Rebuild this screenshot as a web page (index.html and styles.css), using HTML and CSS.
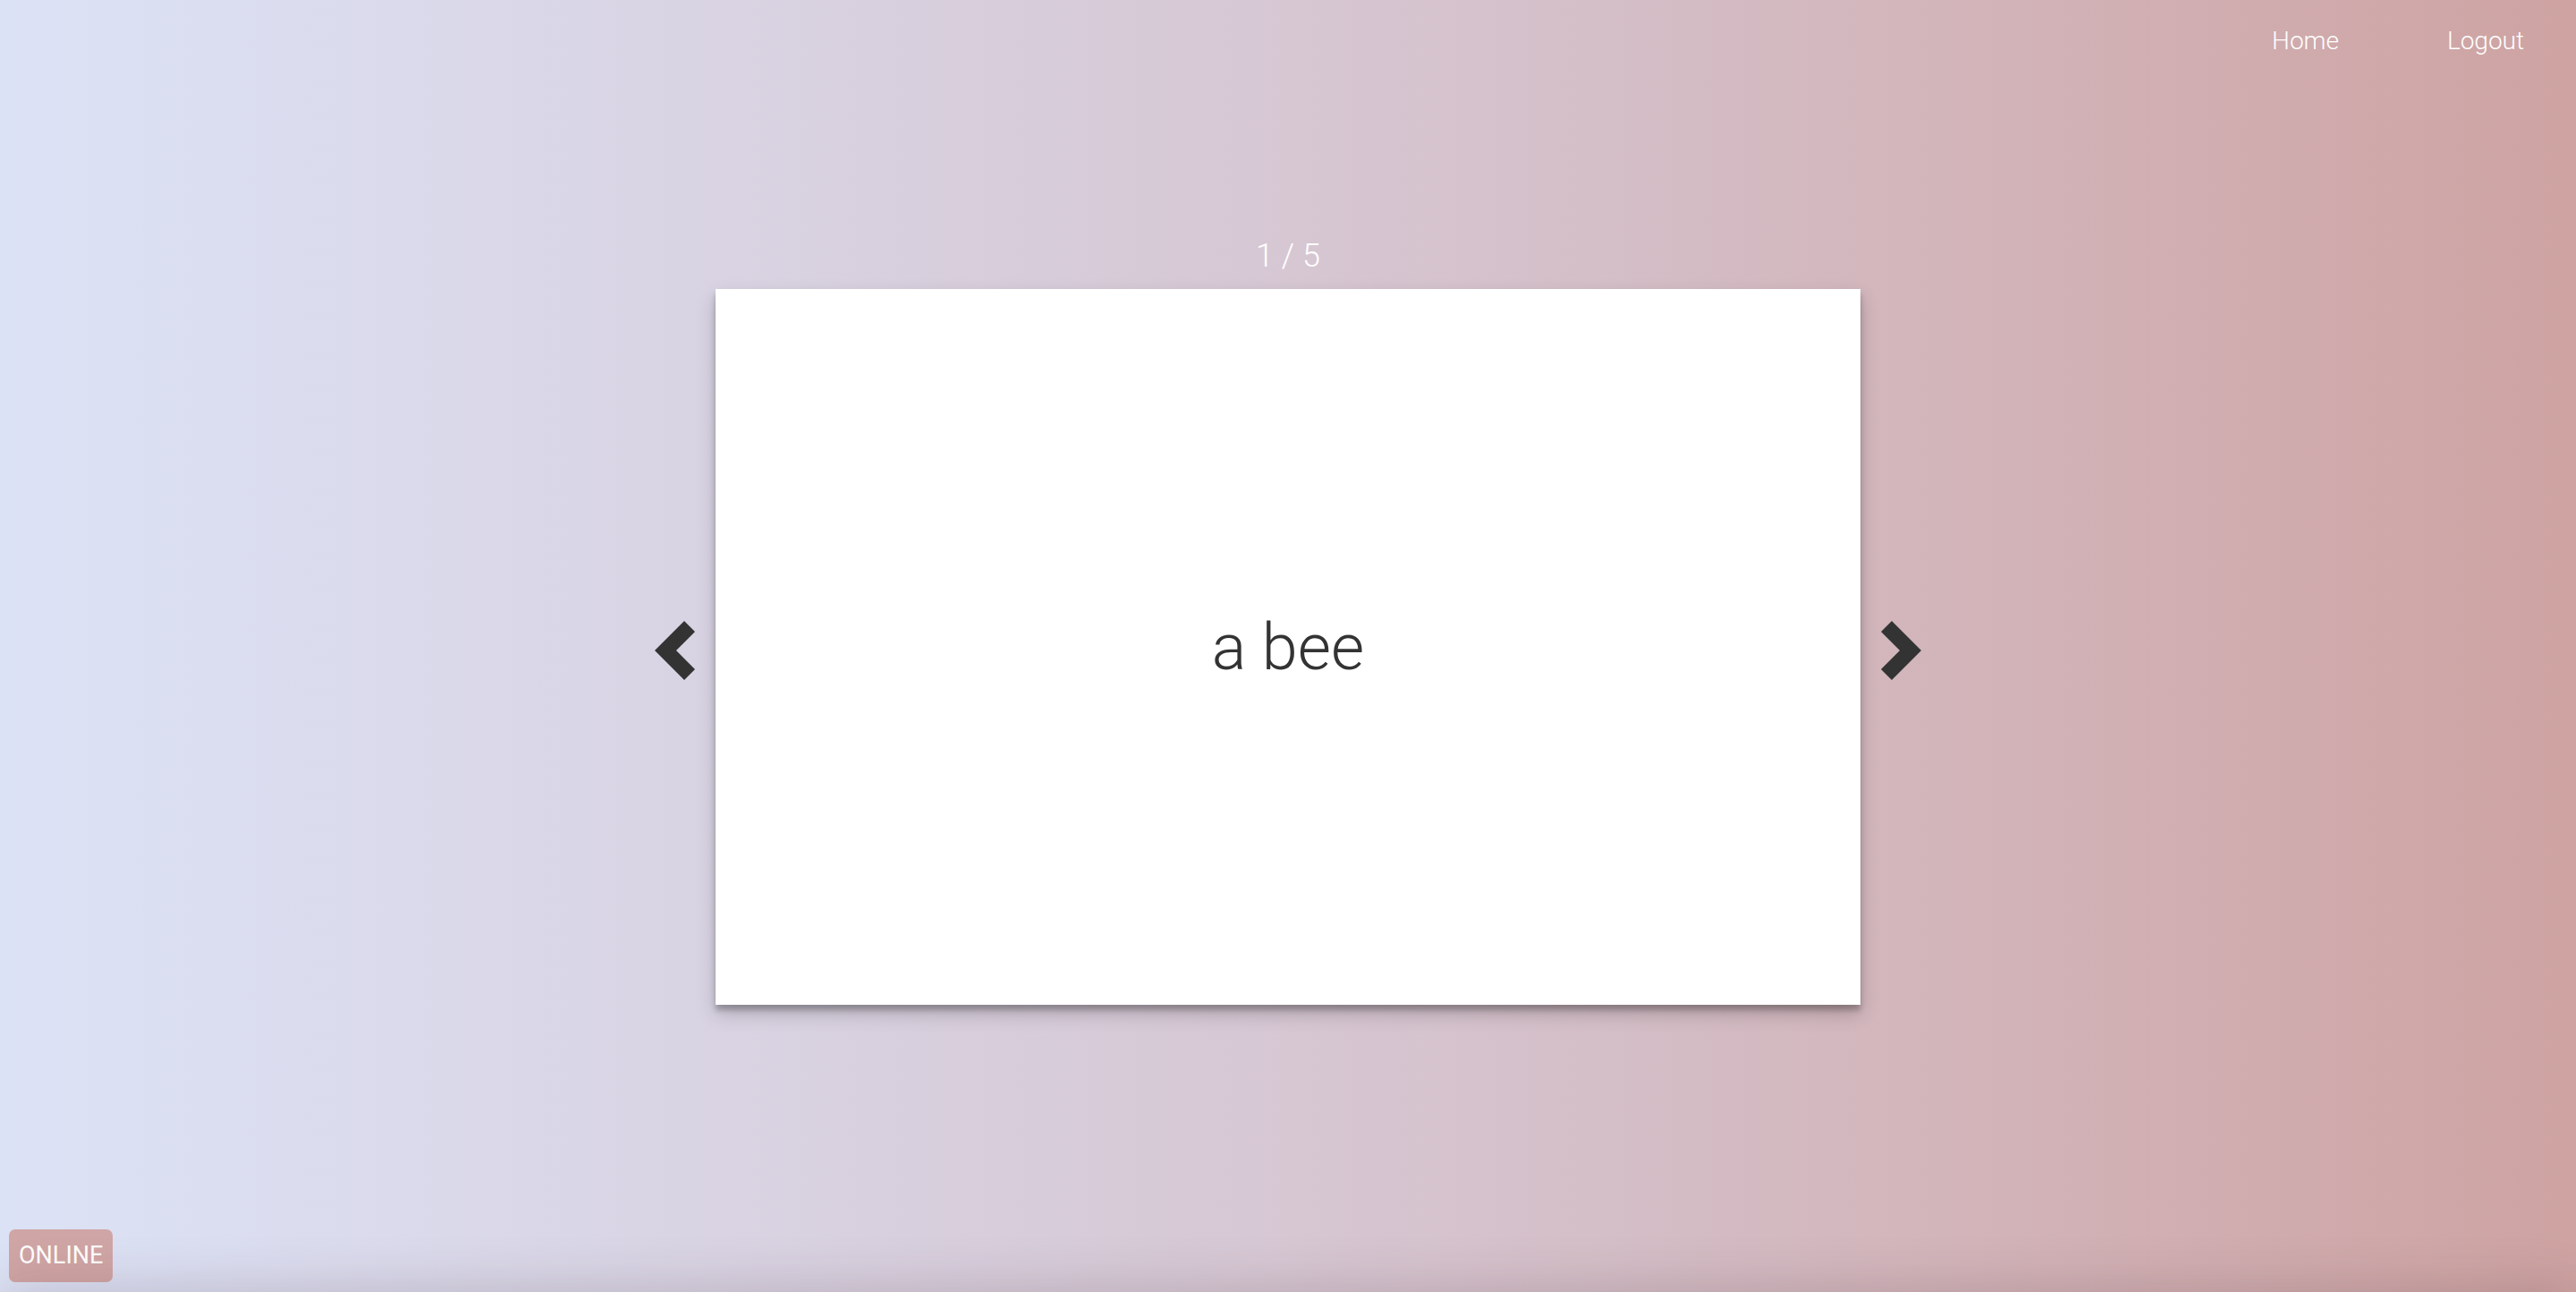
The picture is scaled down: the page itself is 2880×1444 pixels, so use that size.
FILE: index.html
```html
<!DOCTYPE html>
<html lang="en">
<head>
<meta charset="utf-8">
<title>Flashcards</title>
<link rel="stylesheet" href="styles.css">
</head>
<body>
<header class="topbar">
  <nav class="nav">
    <a class="nav-link" href="#">Home</a>
    <a class="nav-link" href="#">Logout</a>
  </nav>
</header>
<main class="viewer">
  <div class="counter">1 / 5</div>
  <div class="stage">
    <button class="arrow" aria-label="Previous">
      <svg class="arrow-icon" viewBox="0 0 45 66" width="45" height="66"><polygon points="0,33 33,0 45,12 24,33 45,54 33,66" fill="#333"/></svg>
    </button>
    <div class="card">
      <span class="word">a bee</span>
    </div>
    <button class="arrow" aria-label="Next">
      <svg class="arrow-icon" viewBox="0 0 45 66" width="45" height="66"><polygon points="45,33 12,0 0,12 21,33 0,54 12,66" fill="#333"/></svg>
    </button>
  </div>
</main>
<div class="status">ONLINE</div>
<div class="bottom-shade"></div>
</body>
</html>
```
FILE: styles.css
```css
html, body {
  margin: 0;
  padding: 0;
  height: 100%;
}
body {
  font-family: Roboto, "Liberation Sans", sans-serif;
  background: linear-gradient(to right, #dce2f5 0%, #dbdff2 6%, #d6c7d3 50%, #cea3a2 100%);
  overflow: hidden;
  color: #333;
}
.topbar {
  display: flex;
  justify-content: flex-end;
  padding: 28px 58px 0 0;
}
.nav {
  display: flex;
  gap: 121px;
}
.nav-link {
  color: #fff;
  text-decoration: none;
  font-weight: 300;
  font-size: 28px;
  line-height: 36px;
}
.viewer {
  display: flex;
  flex-direction: column;
  align-items: center;
  padding-top: 200px;
}
.counter {
  color: #fff;
  font-weight: 300;
  font-size: 36px;
  line-height: 44px;
  margin-bottom: 15px;
}
.stage {
  display: flex;
  align-items: center;
  gap: 23px;
}
.arrow {
  background: none;
  border: 0;
  padding: 0;
  width: 45px;
  height: 66px;
  display: flex;
  margin-top: 8px;
  cursor: pointer;
}
.arrow-icon {
  display: block;
}
.card {
  width: 1280px;
  height: 800px;
  background: #fff;
  box-shadow: 0 10px 20px rgba(0,0,0,0.19), 0 6px 6px rgba(0,0,0,0.23);
  display: flex;
  align-items: center;
  justify-content: center;
}
.word {
  font-weight: 300;
  font-size: 72px;
  color: #333;
}
.status {
  position: fixed;
  left: 10px;
  bottom: 11px;
  height: 59px;
  line-height: 59px;
  padding: 0 11px;
  background: #d0a5a5;
  color: #fff;
  font-size: 27px;
  border-radius: 7px;
}
.bottom-shade {
  position: fixed;
  left: 0;
  right: 0;
  bottom: -60px;
  height: 60px;
  box-shadow: 0 0 60px rgba(70, 40, 50, 0.22);
}
```
